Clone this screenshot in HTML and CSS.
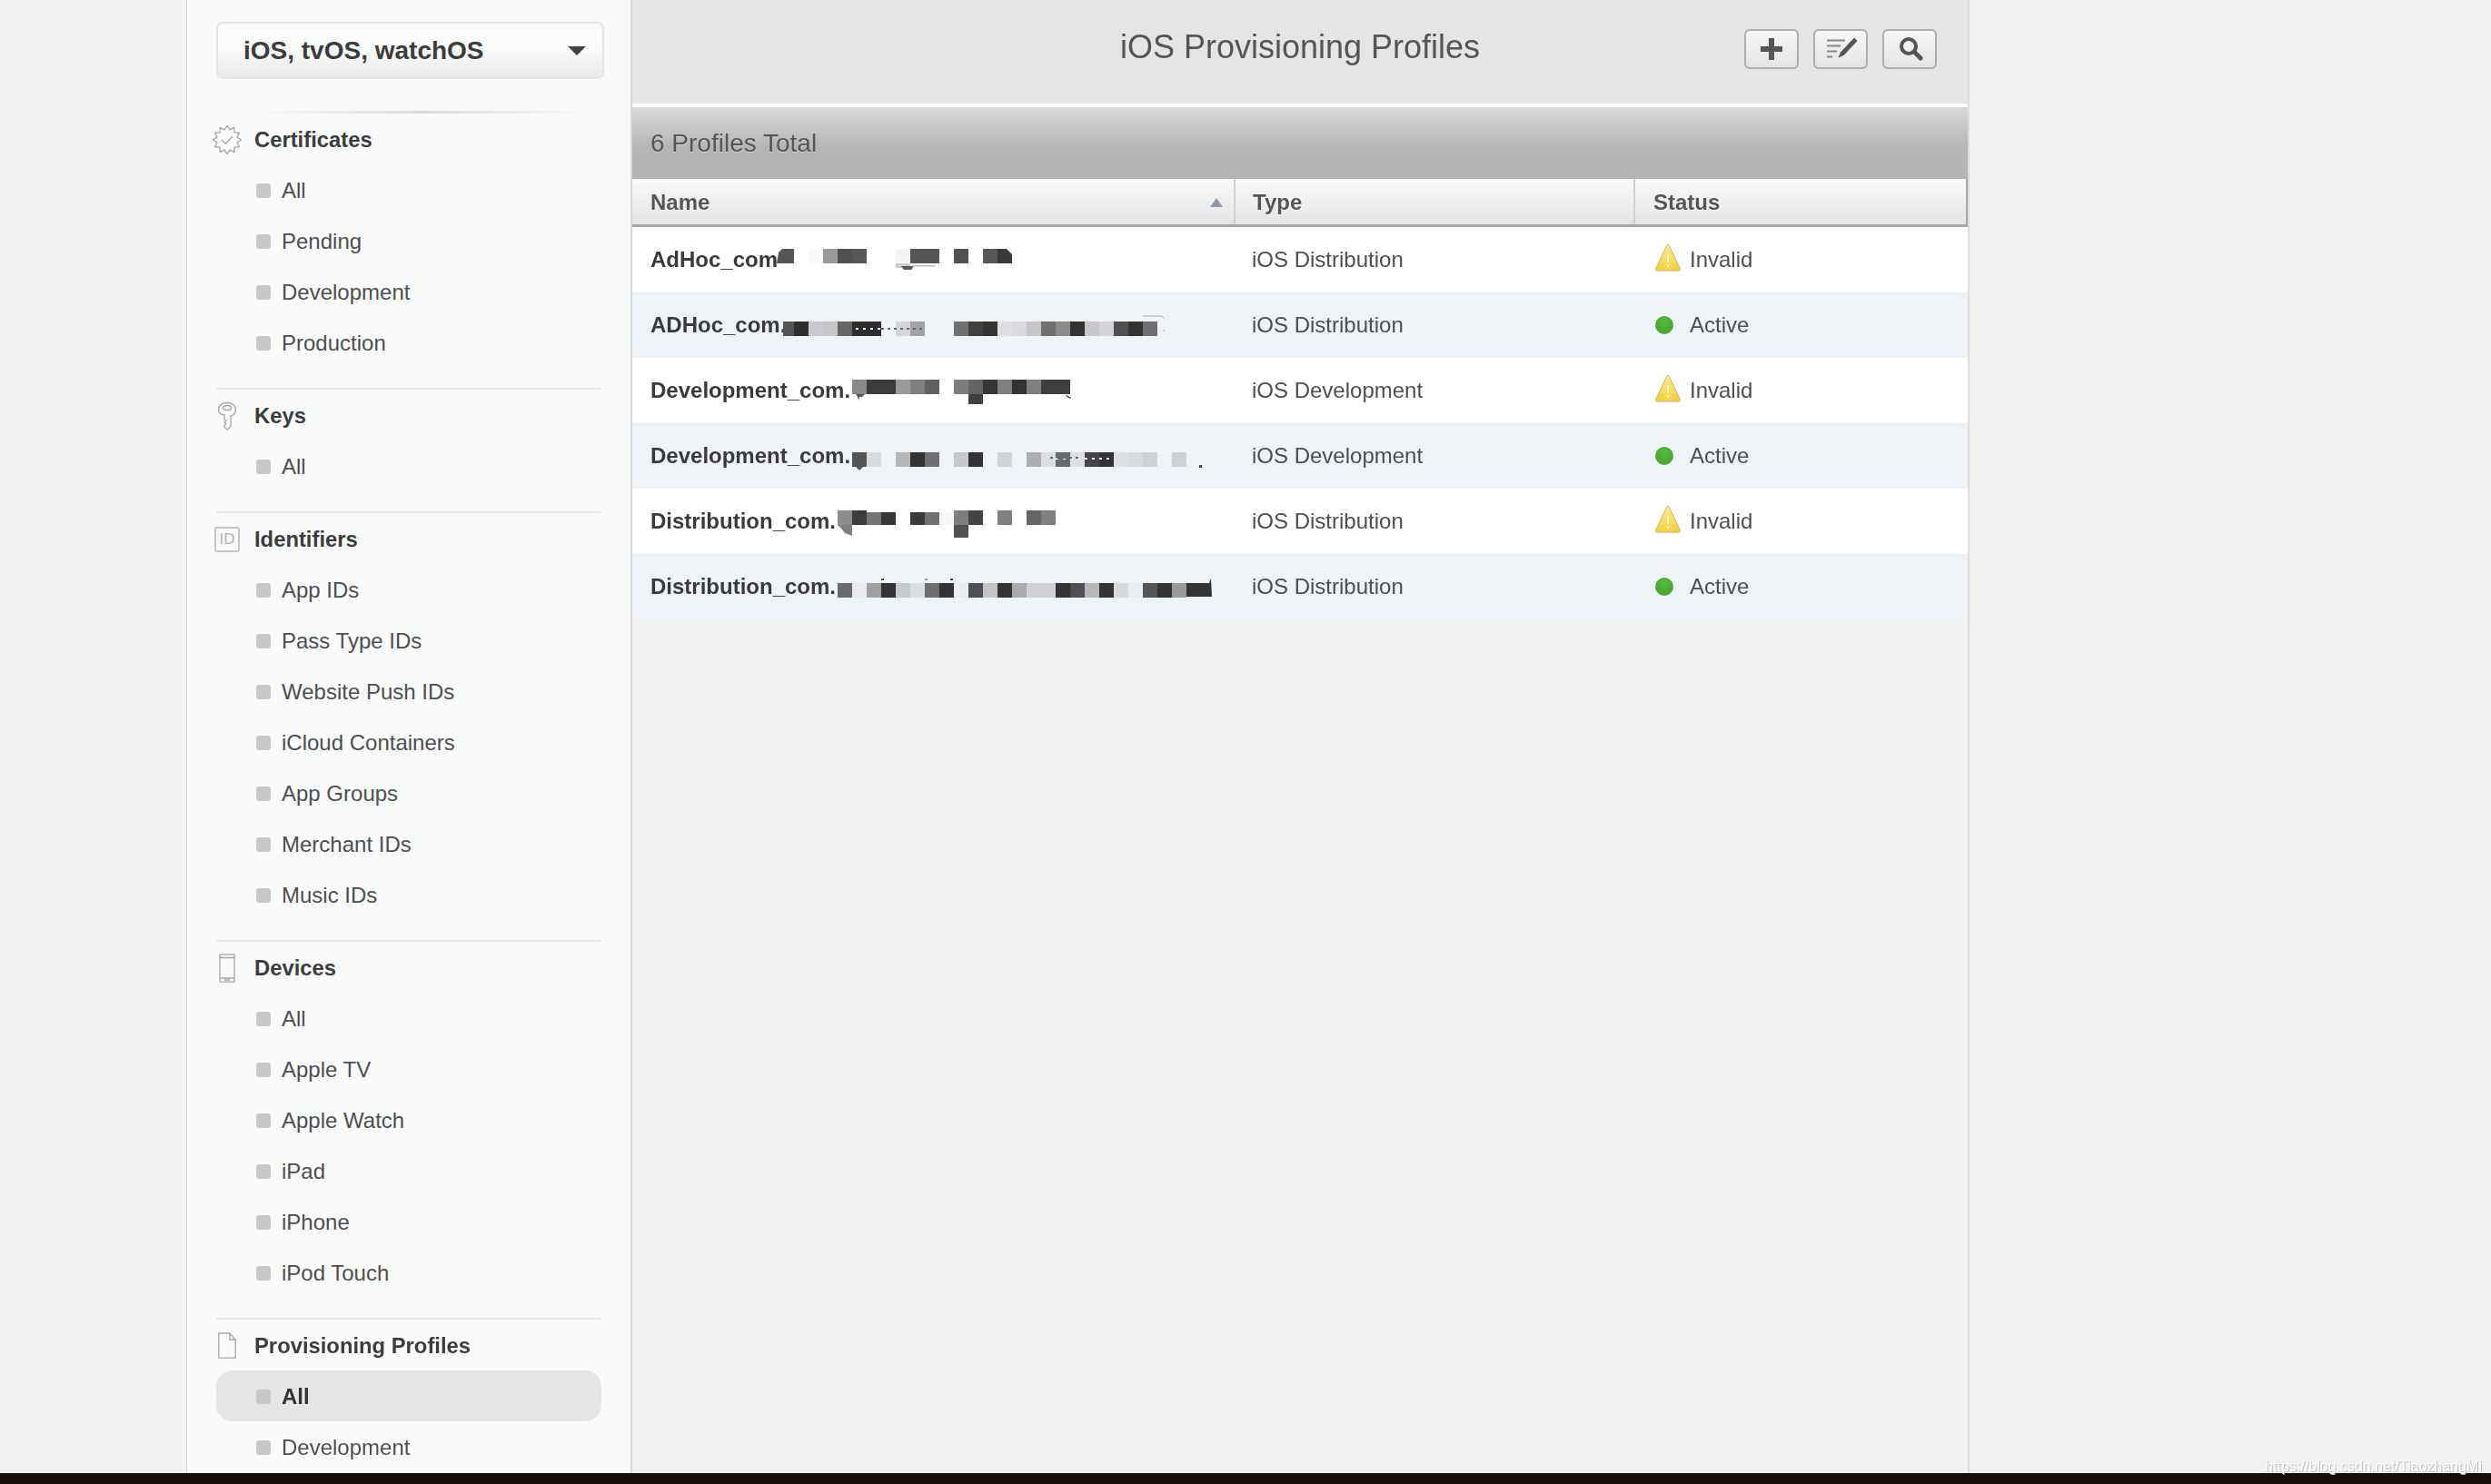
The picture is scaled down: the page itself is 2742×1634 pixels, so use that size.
FILE: index.html
```html
<!DOCTYPE html>
<html lang="en">
<head>
<meta charset="utf-8">
<title>iOS Provisioning Profiles</title>
<link rel="stylesheet" href="styles.css">
</head>
<body>
<div class="page">
  <div class="stage">
    <aside class="sidebar">
      <div class="select"><span>iOS, tvOS, watchOS</span><i class="caret"></i></div>
      <div class="fade-rule"></div>

      <section class="group">
        <h3 class="group-title">
          <svg class="gi" viewBox="0 0 32 32"><polygon class="gi-s" points="31.5,16 27.1,18.98 29.4,23.75 24.13,24.13 23.75,29.4 18.98,27.1 16,31.5 13.02,27.1 8.25,29.4 7.87,24.13 2.6,23.75 4.9,18.98 .5,16 4.9,13.02 2.6,8.25 7.87,7.87 8.25,2.6 13.02,4.9 16,.5 18.98,4.9 23.75,2.6 24.13,7.87 29.4,8.25 27.1,13.02"/><path class="gi-s" d="M10 16l4.500 4.500L22 12"/></svg>
          Certificates</h3>
        <ul class="items">
          <li class="item"><i class="dot"></i>All</li>
          <li class="item"><i class="dot"></i>Pending</li>
          <li class="item"><i class="dot"></i>Development</li>
          <li class="item"><i class="dot"></i>Production</li>
        </ul>
      </section>

      <section class="group">
        <h3 class="group-title">
          <svg class="gi" viewBox="0 0 32 32"><path class="gi-s" d="M16 1.500c5.500 0 9.500 3.200 9.500 7.500 0 3.300-2.300 6-5.500 7.200V27l-3.500 4-3.500-2.500v-2.500l2-1.500-2-1.500 2-1.500-2-1.500v-5.300C9 15 6.500 12.300 6.500 9c0-4.300 4-7.500 9.500-7.500z"/><ellipse class="gi-s" cx="16" cy="7" rx="4.500" ry="2.500"/></svg>
          Keys</h3>
        <ul class="items">
          <li class="item"><i class="dot"></i>All</li>
        </ul>
      </section>

      <section class="group">
        <h3 class="group-title">
          <span class="gi id-badge">ID</span>
          Identifiers</h3>
        <ul class="items">
          <li class="item"><i class="dot"></i>App IDs</li>
          <li class="item"><i class="dot"></i>Pass Type IDs</li>
          <li class="item"><i class="dot"></i>Website Push IDs</li>
          <li class="item"><i class="dot"></i>iCloud Containers</li>
          <li class="item"><i class="dot"></i>App Groups</li>
          <li class="item"><i class="dot"></i>Merchant IDs</li>
          <li class="item"><i class="dot"></i>Music IDs</li>
        </ul>
      </section>

      <section class="group">
        <h3 class="group-title">
          <svg class="gi" viewBox="0 0 32 32"><path class="gi-s" d="M8.800.800h14.400a.8.8 0 0 1 .8.800v28.800a.8.8 0 0 1-.8.800H8.800a.8.8 0 0 1-.8-.800V1.600a.8.8 0 0 1 .8-.800zM8 4.500h16M8 27h16M13 29h6"/></svg>
          Devices</h3>
        <ul class="items">
          <li class="item"><i class="dot"></i>All</li>
          <li class="item"><i class="dot"></i>Apple TV</li>
          <li class="item"><i class="dot"></i>Apple Watch</li>
          <li class="item"><i class="dot"></i>iPad</li>
          <li class="item"><i class="dot"></i>iPhone</li>
          <li class="item"><i class="dot"></i>iPod Touch</li>
        </ul>
      </section>

      <section class="group group-last">
        <h3 class="group-title">
          <svg class="gi" viewBox="0 0 32 32"><path class="gi-s" d="M6.800 2h12l6.400 7v20.200H6.800zM18.800 2v7h6.400"/></svg>
          Provisioning Profiles</h3>
        <ul class="items">
          <li class="item item-active"><i class="dot"></i>All</li>
          <li class="item"><i class="dot"></i>Development</li>
        </ul>
      </section>
    </aside>

    <main class="main">
      <header class="topbar">
        <span></span>
        <h1 class="title">iOS Provisioning Profiles</h1>
        <div class="actions">
          <button class="tool"><svg viewBox="0 0 56 40"><path class="ic-fill" d="M25 8h6v9h9v6h-9v9h-6v-9h-9v-6h9z"/></svg></button>
          <button class="tool"><svg viewBox="0 0 56 40"><path class="ic-line" d="M13 10.500h20M13 16.500h15M13 22.500h11M13 28.500h6"/><path class="ic-fill" d="M43 7.500l3.500 3.500-15 16-6 2.500 2.500-6z"/></svg></button>
          <button class="tool"><svg viewBox="0 0 56 40"><circle class="ic-ring" cx="27" cy="17" r="8"/><path class="ic-handle" d="M33 23l7 7"/></svg></button>
        </div>
      </header>

      <div class="total">6 Profiles Total</div>

      <div class="thead">
        <div class="th th-name">Name<svg class="sort" viewBox="0 0 14 10"><path d="M7 0l7 10H0z"/></svg></div>
        <div class="th">Type</div>
        <div class="th th-last">Status</div>
      </div>

      <div class="row">
        <div class="td td-name">AdHoc_com
          <svg class="mosaic" viewBox="0 0 500 72"><path d="M-1 28l4-4h13v16H-3z" fill="#555"/><rect x="32" y="24" width="16" height="16" fill="#fafafa"/><rect x="48" y="24" width="16" height="16" fill="#999"/><rect x="64" y="24" width="16" height="16" fill="#505050"/><rect x="80" y="24" width="16" height="16" fill="#585858"/><rect x="128" y="24" width="16" height="16" fill="#f4f4f4"/><rect x="128" y="40" width="16" height="5" fill="#ccc"/><rect x="144" y="24" width="32" height="16" fill="#555"/><rect x="192" y="24" width="16" height="16" fill="#505050"/><rect x="224" y="24" width="16" height="16" fill="#585858"/><path d="M240 24h10l6 6v10h-16z" fill="#3a3a3a"/><path d="M134 43h14l-3 4h-8z" fill="#555"/><rect x="146" y="42" width="26" height="1.500" fill="#bbb"/></svg>
        </div>
        <div class="td">iOS Distribution</div>
        <div class="td td-status"><svg class="state" viewBox="0 0 28 30"><defs><linearGradient id="warn" x1="0" y1="0" x2="0" y2="1"><stop offset="0" stop-color="#fdeb8e"/><stop offset="1" stop-color="#f8ce3c"/></linearGradient></defs><path d="M14 .5c.6 0 1 .4 1.300 1L27.600 27c.5 1.100-.1 2-1.300 2H1.700c-1.200 0-1.800-.9-1.300-2L12.700 1.500c.3-.6.700-1 1.300-1z" fill="url(#warn)" stroke="#cbb06c" stroke-width="1"/><path d="M13 11h2l-.3 9h-1.400zM13 22.500h2v2.500h-2z" fill="#fff"/></svg>Invalid</div>
      </div>

      <div class="row row-alt">
        <div class="td td-name">ADHoc_com.
          <svg class="mosaic" viewBox="0 0 500 72"><rect x="4" y="32" width="12" height="16" fill="#555"/><rect x="16" y="32" width="16" height="16" fill="#2e2e2e"/><rect x="32" y="32" width="16" height="16" fill="#c8cace"/><rect x="48" y="32" width="16" height="16" fill="#c4c6c8"/><rect x="64" y="32" width="16" height="16" fill="#666"/><rect x="80" y="32" width="32" height="16" fill="#2e2e2e"/><rect x="128" y="32" width="16" height="16" fill="#d4d6da"/><rect x="144" y="32" width="16" height="16" fill="#a0a2a4"/><path class="speck-dark" d="M112 40h48"/><path class="speck-light" d="M84 40h28"/><rect x="192" y="32" width="16" height="16" fill="#707070"/><rect x="208" y="32" width="16" height="16" fill="#404040"/><rect x="224" y="32" width="16" height="16" fill="#333"/><rect x="240" y="32" width="16" height="16" fill="#dcdee2"/><rect x="256" y="32" width="16" height="16" fill="#d8dadc"/><rect x="272" y="32" width="16" height="16" fill="#c4c6c8"/><rect x="288" y="32" width="16" height="16" fill="#707070"/><rect x="304" y="32" width="16" height="16" fill="#8c8c8e"/><rect x="320" y="32" width="16" height="16" fill="#333"/><rect x="336" y="32" width="16" height="16" fill="#c6c8cc"/><rect x="352" y="32" width="16" height="16" fill="#d2d4d8"/><rect x="368" y="32" width="16" height="16" fill="#505052"/><rect x="384" y="32" width="16" height="16" fill="#333"/><rect x="400" y="32" width="16" height="16" fill="#707072"/><path d="M400 26h20l3 2M423 41v2" fill="none" stroke="#aaa"/></svg>
        </div>
        <div class="td">iOS Distribution</div>
        <div class="td td-status"><i class="live"></i>Active</div>
      </div>

      <div class="row">
        <div class="td td-name">Development_com.
          <svg class="mosaic" viewBox="0 0 500 72"><rect x="80" y="24" width="16" height="16" fill="#888"/><rect x="96" y="24" width="32" height="16" fill="#3c3c3c"/><rect x="128" y="24" width="16" height="16" fill="#9a9a9a"/><rect x="144" y="24" width="16" height="16" fill="#808080"/><rect x="160" y="24" width="16" height="16" fill="#606060"/><rect x="192" y="24" width="16" height="16" fill="#7c7c7c"/><rect x="208" y="24" width="16" height="16" fill="#636363"/><rect x="208" y="40" width="16" height="11" fill="#404040"/><rect x="224" y="24" width="16" height="16" fill="#363636"/><rect x="240" y="24" width="16" height="16" fill="#808080"/><rect x="256" y="24" width="16" height="16" fill="#333"/><rect x="272" y="24" width="16" height="16" fill="#808080"/><rect x="288" y="24" width="32" height="16" fill="#3e3e3e"/><path d="M84 40h10l-3 3h-3l-1 4-1-4z" fill="#555"/><path d="M316 41l5 3-1 1-5-3z" fill="#444"/></svg>
        </div>
        <div class="td">iOS Development</div>
        <div class="td td-status"><svg class="state" viewBox="0 0 28 30"><path d="M14 .5c.6 0 1 .4 1.300 1L27.600 27c.5 1.100-.1 2-1.300 2H1.700c-1.200 0-1.800-.9-1.300-2L12.700 1.500c.3-.6.700-1 1.300-1z" fill="url(#warn)" stroke="#cbb06c" stroke-width="1"/><path d="M13 11h2l-.3 9h-1.400zM13 22.500h2v2.500h-2z" fill="#fff"/></svg>Invalid</div>
      </div>

      <div class="row row-alt">
        <div class="td td-name">Development_com.
          <svg class="mosaic" viewBox="0 0 500 72"><rect x="80" y="32" width="16" height="16" fill="#555"/><path d="M84 48h8l-4 4z" fill="#555"/><rect x="96" y="32" width="16" height="16" fill="#d8dadc"/><rect x="128" y="32" width="16" height="16" fill="#b4b6b8"/><rect x="144" y="32" width="16" height="16" fill="#333"/><rect x="160" y="32" width="16" height="16" fill="#707070"/><rect x="192" y="32" width="16" height="16" fill="#c6c8cc"/><rect x="208" y="32" width="16" height="16" fill="#333"/><rect x="240" y="32" width="16" height="16" fill="#d0d2d6"/><rect x="272" y="32" width="16" height="16" fill="#acaeb0"/><rect x="288" y="32" width="16" height="16" fill="#dcdee2"/><rect x="304" y="32" width="16" height="16" fill="#666a70"/><rect x="320" y="32" width="16" height="16" fill="#dcdee2"/><rect x="336" y="32" width="16" height="16" fill="#44464a"/><rect x="352" y="32" width="16" height="16" fill="#333"/><rect x="368" y="32" width="16" height="16" fill="#dcdfe3"/><rect x="384" y="32" width="16" height="16" fill="#d8dadf"/><rect x="400" y="32" width="16" height="16" fill="#ced1d5"/><rect x="432" y="32" width="16" height="16" fill="#cdd0d5"/><path class="speck-light" d="M304 39h64"/><path class="speck-dark" d="M298 38h34"/><rect x="462" y="46" width="3" height="3" fill="#444"/></svg>
        </div>
        <div class="td">iOS Development</div>
        <div class="td td-status"><i class="live"></i>Active</div>
      </div>

      <div class="row">
        <div class="td td-name">Distribution_com.
          <svg class="mosaic" viewBox="0 0 500 72"><rect x="64" y="24" width="16" height="16" fill="#8c8c8c"/><path d="M64 40h16v12l-8-3-4-5z" fill="#808080"/><rect x="80" y="24" width="16" height="16" fill="#3c3c3c"/><rect x="96" y="26" width="16" height="14" fill="#757575"/><rect x="112" y="26" width="16" height="14" fill="#363636"/><rect x="144" y="26" width="16" height="14" fill="#3a3a3a"/><rect x="160" y="26" width="16" height="14" fill="#707070"/><rect x="176" y="26" width="16" height="14" fill="#f6f6f6"/><rect x="192" y="24" width="16" height="16" fill="#7e7e7e"/><rect x="192" y="40" width="16" height="14" fill="#505050"/><rect x="208" y="24" width="16" height="16" fill="#444"/><rect x="240" y="24" width="16" height="16" fill="#808080"/><rect x="272" y="24" width="16" height="16" fill="#666"/><rect x="288" y="24" width="16" height="16" fill="#808080"/></svg>
        </div>
        <div class="td">iOS Distribution</div>
        <div class="td td-status"><svg class="state" viewBox="0 0 28 30"><path d="M14 .5c.6 0 1 .4 1.300 1L27.600 27c.5 1.100-.1 2-1.300 2H1.700c-1.200 0-1.800-.9-1.300-2L12.700 1.500c.3-.6.700-1 1.300-1z" fill="url(#warn)" stroke="#cbb06c" stroke-width="1"/><path d="M13 11h2l-.3 9h-1.400zM13 22.500h2v2.500h-2z" fill="#fff"/></svg>Invalid</div>
      </div>

      <div class="row row-alt">
        <div class="td td-name">Distribution_com.
          <svg class="mosaic" viewBox="0 0 500 72"><rect x="64" y="32" width="16" height="16" fill="#6a6a6c"/><rect x="80" y="32" width="16" height="16" fill="#e8eaee"/><rect x="96" y="32" width="16" height="16" fill="#a0a0a2"/><rect x="112" y="32" width="16" height="16" fill="#333"/><rect x="128" y="32" width="16" height="16" fill="#c6c9cd"/><rect x="144" y="32" width="16" height="16" fill="#dadde1"/><rect x="160" y="32" width="16" height="16" fill="#6e6e70"/><rect x="176" y="32" width="16" height="16" fill="#333"/><rect x="192" y="32" width="16" height="16" fill="#eaedf1"/><rect x="208" y="32" width="16" height="16" fill="#505052"/><rect x="224" y="32" width="16" height="16" fill="#c2c4c6"/><rect x="240" y="32" width="16" height="16" fill="#333"/><rect x="256" y="32" width="16" height="16" fill="#a8aaac"/><rect x="272" y="32" width="32" height="16" fill="#cfd1d5"/><rect x="304" y="32" width="16" height="16" fill="#333"/><rect x="320" y="32" width="16" height="16" fill="#505052"/><rect x="336" y="32" width="16" height="16" fill="#b6b8ba"/><rect x="352" y="32" width="16" height="16" fill="#333"/><rect x="368" y="32" width="16" height="16" fill="#d6d8dc"/><rect x="384" y="32" width="16" height="16" fill="#e8ebef"/><rect x="400" y="32" width="16" height="16" fill="#555557"/><rect x="416" y="32" width="16" height="16" fill="#333"/><rect x="432" y="32" width="16" height="16" fill="#9a9a9c"/><path d="M448 32h25l2-5 1 20h-28z" fill="#333"/><rect x="112" y="27" width="3" height="2" fill="#444"/><rect x="160" y="27" width="3" height="2" fill="#999"/><rect x="188" y="27" width="3" height="2" fill="#444"/></svg>
        </div>
        <div class="td">iOS Distribution</div>
        <div class="td td-status"><i class="live"></i>Active</div>
      </div>
    </main>
  </div>
  <div class="bottom-strip"></div>
  <div class="watermark">https://blog.csdn.net/TiaozhangMi</div>
</div>
</body>
</html>
```
FILE: styles.css
```css
* { box-sizing: border-box; }
html, body { margin: 0; padding: 0; }
body {
  width: 2742px;
  height: 1634px;
  overflow: hidden;
  background: #f1f1f1;
  font-family: "Liberation Sans", Arial, sans-serif;
  font-size: 24px;
  color: #4a4a4a;
}
.page { position: relative; display: flex; flex-direction: column; height: 1634px; }
.stage {
  display: flex;
  height: 1622px;
  overflow: hidden;
  padding-left: 205px;
  filter: blur(.55px);
}
.bottom-strip { height: 12px; background: #140d0a; }
.watermark {
  position: absolute;
  right: 10px;
  bottom: 11px;
  font-size: 16px;
  line-height: 16px;
  color: rgba(255,255,255,.9);
  text-shadow: 1px 1px 0 #bcbcbc;
  filter: blur(.3px);
}

/* sidebar */
.sidebar {
  flex: none;
  width: 491px;
  padding: 24px 32px 0;
  background: #f9fbfb;
  border-left: 1px solid #d2d4d4;
  border-right: 2px solid #d6d8d8;
}
.select {
  display: flex;
  align-items: center;
  justify-content: space-between;
  width: 427px;
  height: 63px;
  padding: 1px 18px 0 28px;
  border: 2px solid #e4e6e6;
  border-radius: 7px;
  background: linear-gradient(#fafbfb 45%, #e8e8e8);
  font-size: 28px;
  font-weight: 700;
  color: #3c3c3c;
}
.caret {
  width: 0;
  height: 0;
  border-left: 10px solid transparent;
  border-right: 10px solid transparent;
  border-top: 10px solid #444;
}
.fade-rule {
  height: 3px;
  margin: 35px 12px 0 42px;
  background: linear-gradient(90deg, transparent, #dcdcdc 50%, transparent);
}
.group { padding-bottom: 22px; border-bottom: 2px solid #e8eaea; }
.group-last { border-bottom: 0; }
.group-title {
  display: flex;
  align-items: center;
  height: 56px;
  margin: 0;
  padding-top: 1px;
  font-size: 23.8px;
  font-weight: 700;
  color: #3c3c3c;
}
.gi { flex: none; width: 32px; height: 32px; margin: 0 14px 0 -4px; }
.gi-s { fill: none; stroke: #a4a6a6; stroke-width: 1.3; }
.id-badge {
  display: flex;
  align-items: center;
  justify-content: center;
  width: 28px;
  height: 28px;
  margin: 0 16px 0 -2px;
  border: 2px solid #c4c6c6;
  border-radius: 3px;
  font-size: 17px;
  font-weight: 400;
  color: #b4b6b6;
}
.items { margin: 0; padding: 0; list-style: none; }
.item {
  display: flex;
  align-items: center;
  height: 56px;
  padding: 1px 0 0 44px;
  color: #4e4e4e;
}
.dot {
  flex: none;
  width: 16px;
  height: 16px;
  margin-right: 12px;
  border-radius: 3px;
  background: #c8c8c8;
}
.item-active {
  border-radius: 18px;
  background: #e5e5e5;
  font-weight: 700;
  color: #333;
}

/* main */
.main {
  flex: none;
  width: 1472px;
  border-right: 2px solid #dcdcdc;
}
.topbar {
  display: grid;
  grid-template-columns: 1fr auto 1fr;
  align-items: center;
  height: 118px;
  padding: 0 34px 6px 34px;
  background: #e5e5e5;
  border-bottom: 4px solid;
  border-image: linear-gradient(#c4c4c4 50%, #fff 50%) 1;
}
.title {
  margin: 0 0 5px 0;
  font-size: 36px;
  font-weight: 400;
  line-height: 44px;
  color: #555;
  white-space: nowrap;
}
.actions { display: flex; justify-content: flex-end; gap: 16px; }
.tool {
  display: block;
  width: 60px;
  height: 44px;
  padding: 0;
  border: 2px solid #aeaeae;
  border-radius: 6px;
  background: linear-gradient(#f6f6f6, #e4e4e4);
}
.tool svg { display: block; width: 56px; height: 40px; overflow: visible; }
.ic-fill { fill: #555; }
.ic-line { fill: none; stroke: #888; stroke-width: 2; }
.ic-ring { fill: none; stroke: #555; stroke-width: 4; }
.ic-handle { fill: none; stroke: #555; stroke-width: 5; stroke-linecap: round; }

.total {
  display: flex;
  align-items: center;
  height: 79px;
  padding: 1px 0 0 20px;
  background: linear-gradient(#dadada, #b5b5b5 55%, #b4b4b4);
  font-size: 28px;
  color: #555;
  text-shadow: 0 1px 0 rgba(255,255,255,.35);
}
.thead {
  display: grid;
  grid-template-columns: 664px 440px 1fr;
  height: 53px;
  background: linear-gradient(#fbfbfb, #e3e3e3);
  border-bottom: 3px solid #a9a9a9;
}
.th {
  position: relative;
  display: flex;
  align-items: center;
  padding: 2px 0 0 19px;
  border-right: 2px solid #cfcfcf;
  font-weight: 700;
  color: #555;
  text-shadow: 0 1px 0 #fff;
}
.th-name { padding-left: 20px; }
.th-last { border-right-color: #a9a9a9; padding-left: 20px; }
.sort { position: absolute; right: 12px; top: 21px; width: 14px; height: 10px; fill: #8d9bac; }
.row {
  display: grid;
  grid-template-columns: 664px 440px 1fr;
  height: 72px;
  background: #fff;
}
.row-alt { background: #eff2f7; }
.td {
  display: flex;
  align-items: center;
  padding-left: 18px;
  color: #4e4e4e;
  white-space: nowrap;
}
.td-name {
  position: relative;
  padding-left: 20px;
  font-weight: 700;
  color: #3a3a3a;
}
.mosaic { position: absolute; left: 162px; top: 0; width: 500px; height: 72px; overflow: visible; }
.speck-dark { fill: none; stroke: #666; stroke-width: 2; stroke-dasharray: 3 4; }
.speck-light { fill: none; stroke: #f2f4f8; stroke-width: 2; stroke-dasharray: 3 5; }
.td-status { padding-left: 22px; }
.state { flex: none; width: 28px; height: 30px; margin-right: 10px; position: relative; top: -2px; }
.live {
  flex: none;
  width: 20px;
  height: 20px;
  margin-right: 18px;
  border-radius: 50%;
  background: radial-gradient(circle at 50% 35%, #56bb3c, #3f9f2b);
}
```
